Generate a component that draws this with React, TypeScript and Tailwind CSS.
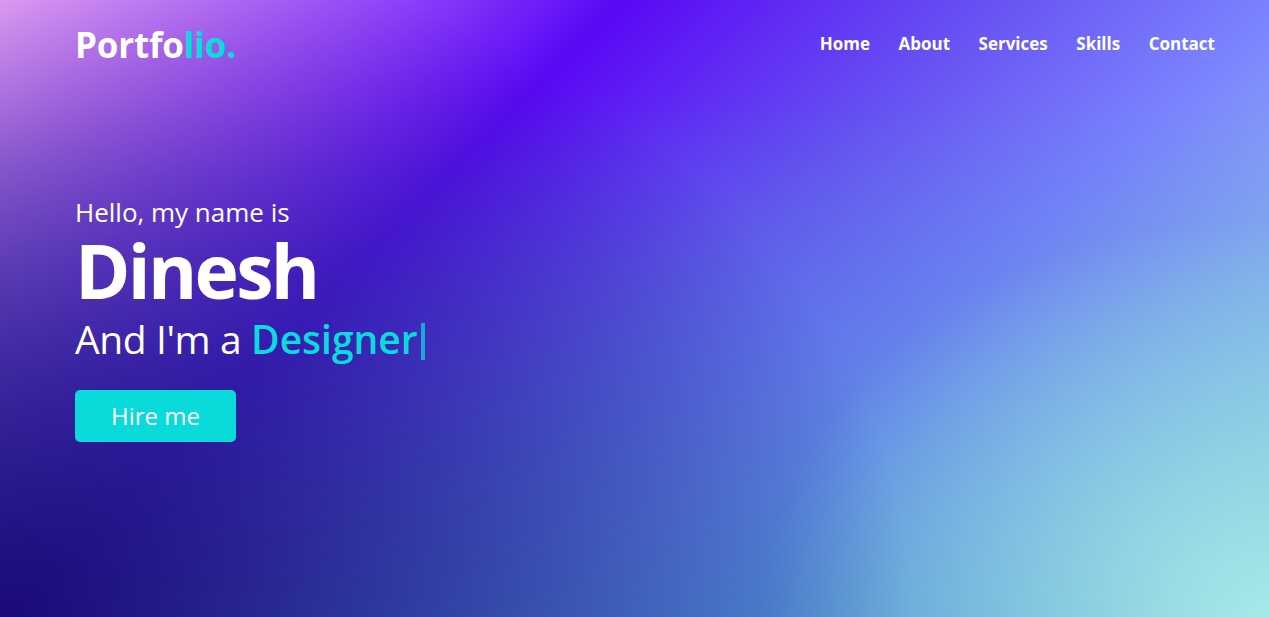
export default function App() {
  const bg =
    "bg-[radial-gradient(ellipse_72%_112%_at_0%_100%,rgba(22,0,110,0.9)_0%,rgba(22,0,110,0.5)_45%,rgba(22,0,110,0)_100%),radial-gradient(ellipse_40%_65%_at_100%_100%,rgba(175,240,235,0.9)_0%,rgba(175,240,235,0)_100%),linear-gradient(to_bottom,rgba(55,135,195,0)_15%,rgba(55,140,195,0.65)_100%),linear-gradient(135deg,#f0aaff_0%,#5a08f5_33%,#6650f2_52%,#7a80fe_67%,#aaeeea_100%)]";
  return (
    <div
      className={`h-[617px] w-full overflow-hidden text-white ${bg}`}
      style={{ fontFamily: '"Open Sans", "Noto Sans", sans-serif' }}
    >
      <header className="flex h-[88px] items-center justify-between pl-[75px] pr-[54px]">
        <div className="text-[35px] font-bold leading-none tracking-[-0.2px]">
          Portfo<span className="text-[#0adcdc]">lio.</span>
        </div>
        <nav className="flex items-center gap-[28.5px] text-[17px] font-bold">
          <a>Home</a>
          <a>About</a>
          <a>Services</a>
          <a>Skills</a>
          <a>Contact</a>
        </nav>
      </header>
      <section className="pl-[75px] pt-[108px]">
        <div className="text-[26px] leading-[32px]">Hello, my name is</div>
        <div className="mt-[2px] text-[75px] font-bold leading-[80px] tracking-[-2.7px]">Dinesh</div>
        <div className="mt-[6px] flex items-center text-[39px] leading-[46px]">
          <span className="whitespace-pre tracking-[-0.4px]">And I'm a </span>
          <span className="font-semibold text-[#0adcdc]">Designer</span>
          <span className="ml-[3px] mt-[4px] inline-block h-[37px] w-[4px] bg-[#16a8d6]" />
        </div>
        <button className="mt-[28px] flex h-[52px] w-[161px] items-center justify-center rounded-[5px] bg-[#0adada] text-[24px] text-white">
          Hire me
        </button>
      </section>
    </div>
  );
}
